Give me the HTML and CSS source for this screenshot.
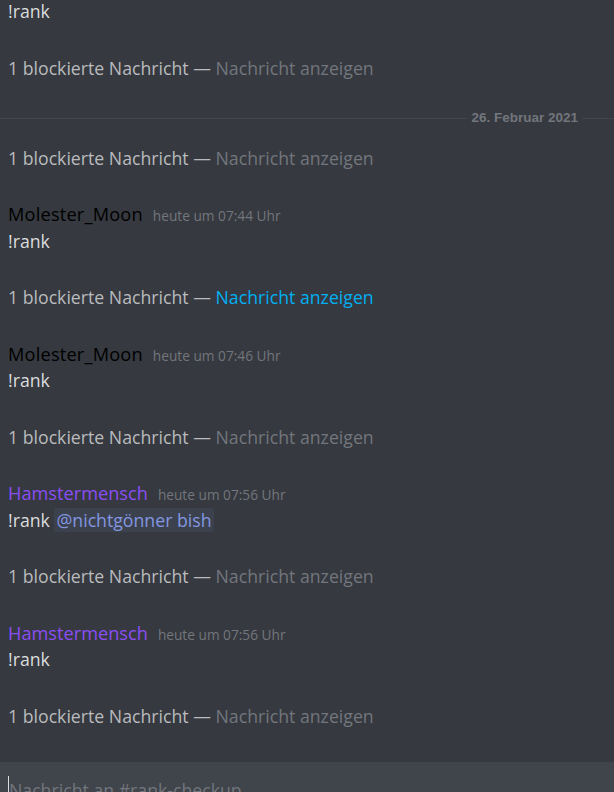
FILE: index.html
```html
<!DOCTYPE html>
<html lang="de">
<head>
    <meta charset="UTF-8">
    <title>#rank-checkup</title>
    <link rel="stylesheet" href="styles.css">
</head>
<body>
<div id="app">
    <div class="messages">
        <div class="msg"><div class="text">!rank</div></div>
        <div class="blocked">1 blockierte Nachricht — <span class="show">Nachricht anzeigen</span></div>
        <div class="divider"><span>26. Februar 2021</span></div>
        <div class="blocked first">1 blockierte Nachricht — <span class="show">Nachricht anzeigen</span></div>
        <div class="msg">
            <div class="head"><span class="name moon">Molester_Moon</span><span class="time">heute um 07:44 Uhr</span></div>
            <div class="text">!rank</div>
        </div>
        <div class="blocked">1 blockierte Nachricht — <span class="show link">Nachricht anzeigen</span></div>
        <div class="msg">
            <div class="head"><span class="name moon">Molester_Moon</span><span class="time">heute um 07:46 Uhr</span></div>
            <div class="text">!rank</div>
        </div>
        <div class="blocked">1 blockierte Nachricht — <span class="show">Nachricht anzeigen</span></div>
        <div class="msg">
            <div class="head"><span class="name hamster">Hamstermensch</span><span class="time">heute um 07:56 Uhr</span></div>
            <div class="text">!rank <span class="mention">@nichtgönner bish</span></div>
        </div>
        <div class="blocked">1 blockierte Nachricht — <span class="show">Nachricht anzeigen</span></div>
        <div class="msg">
            <div class="head"><span class="name hamster">Hamstermensch</span><span class="time">heute um 07:56 Uhr</span></div>
            <div class="text">!rank</div>
        </div>
        <div class="blocked">1 blockierte Nachricht — <span class="show">Nachricht anzeigen</span></div>
    </div>
    <div class="input">
        <span class="cursor"></span><span class="placeholder">Nachricht an #rank-checkup</span>
    </div>
</div>
</body>
</html>
```
FILE: styles.css
```css
*{
    margin: 0;
    padding: 0;
    box-sizing: border-box;
}
html, body{
    height: 100%;
    background: #36393f;
    overflow: hidden;
}
#app{
    height: 792px;
    display: flex;
    flex-direction: column;
    font-family: "Open Sans", "Noto Sans", sans-serif;
    font-size: 17.7px;
    color: #dcddde;
}
.messages{
    flex: 1;
    padding: 0 0 0 8px;
    display: flex;
    flex-direction: column;
    gap: 34.5px;
}
.msg .head{
    height: 22px;
    line-height: 22px;
    display: flex;
    align-items: baseline;
    margin-bottom: 4.5px;
}
.text, .blocked{
    height: 22px;
    line-height: 22px;
    white-space: nowrap;
}
.name{
    font-size: 18.2px;
}
.moon{
    color: #000000;
    letter-spacing: 0.2px;
}
.hamster{
    color: #8a4ef5;
}
.time{
    font-size: 13.7px;
    color: #72767d;
    margin-left: 10px;
}
.mention{
    color: #8397e0;
    background: rgba(114, 137, 218, 0.1);
    border-radius: 3px;
    padding: 0 2px;
}
.blocked{
    color: #b9bbbe;
}
.show{
    color: #72767d;
}
.show.link{
    color: #00b0f4;
}
.divider{
    display: flex;
    align-items: center;
    margin: 4.5px 0 -6.5px -8px;
    height: 1px;
}
.divider::before, .divider::after{
    content: "";
    height: 1px;
    background: #42454a;
}
.divider::before{
    flex: 1;
}
.divider::after{
    width: 32px;
}
.divider span{
    font-family: "Liberation Sans", sans-serif;
    font-size: 13.5px;
    font-weight: bold;
    color: #72767d;
    padding: 0 4px;
    line-height: 14px;
}
.input{
    height: 30px;
    background: #40444b;
    display: flex;
    align-items: flex-start;
    padding: 14px 0 0 8px;
    overflow: hidden;
}
.cursor{
    width: 1px;
    height: 20px;
    background: #dcddde;
    flex: none;
}
.placeholder{
    color: #72767d;
    line-height: 22px;
    margin-top: 3px;
}
```
